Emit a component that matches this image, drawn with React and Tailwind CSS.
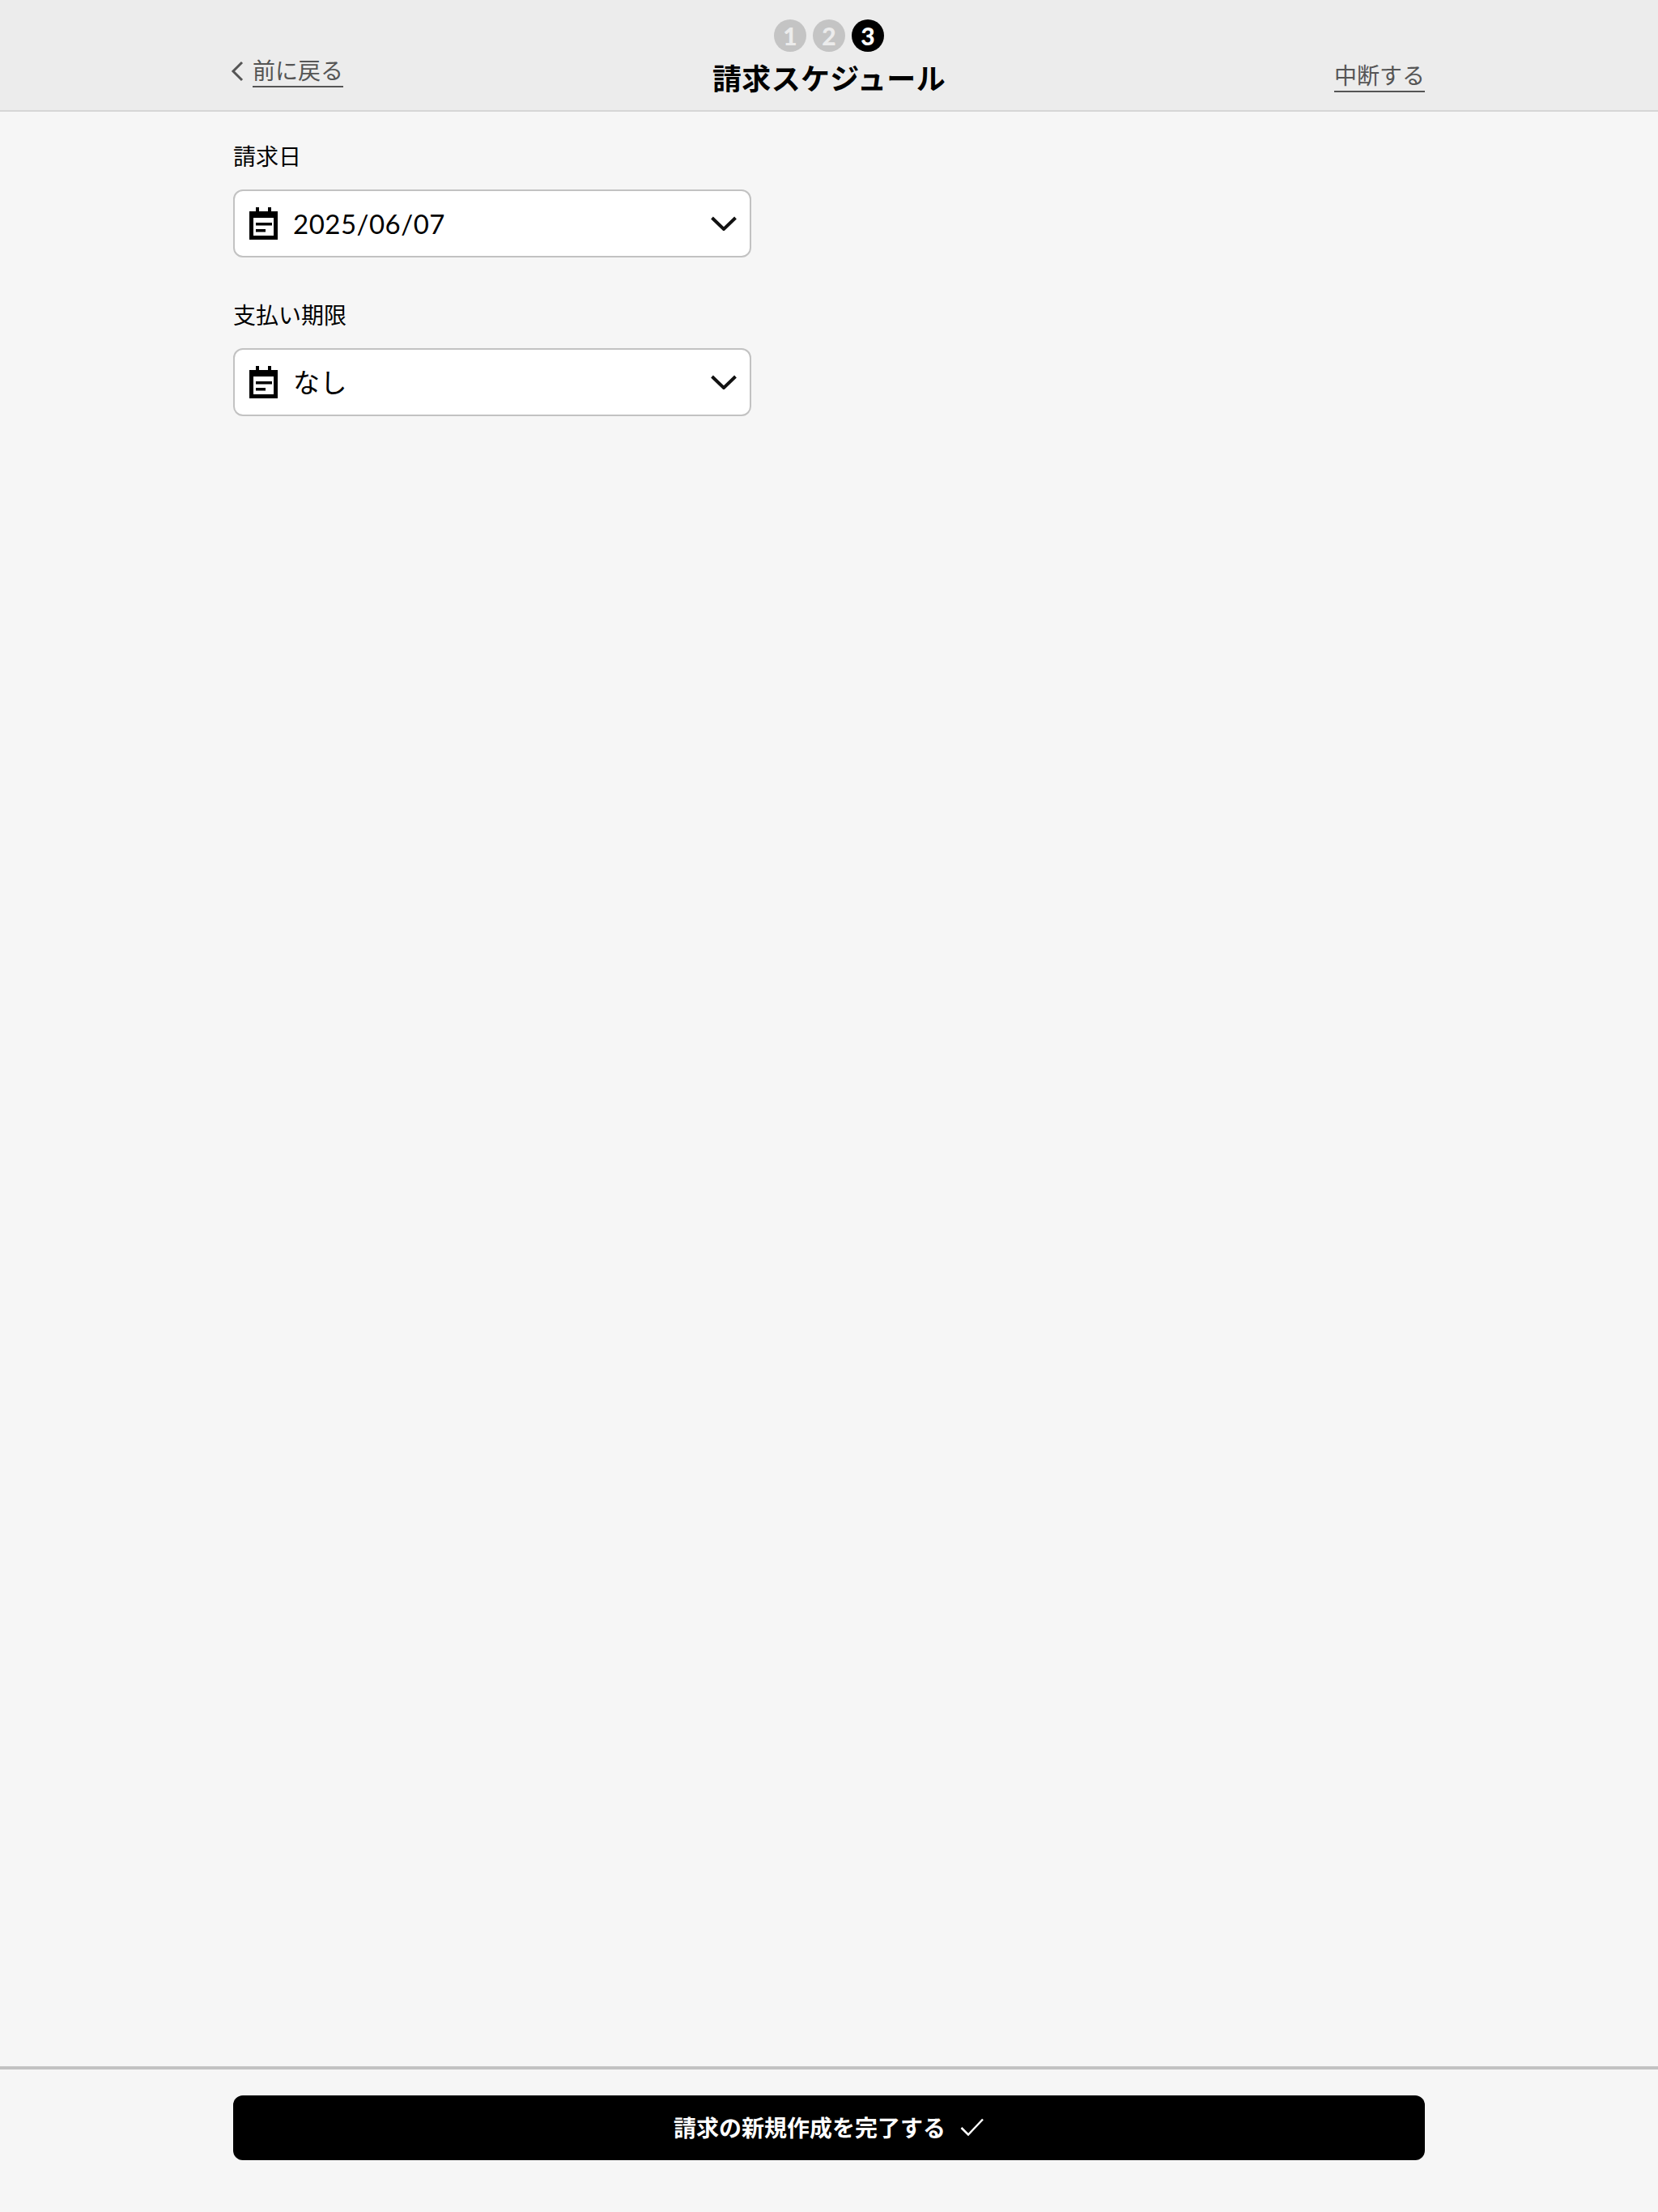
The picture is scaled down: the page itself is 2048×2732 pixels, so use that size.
import React from 'react';

const FONT = "font-['Lato','Noto_Sans_CJK_JP',sans-serif]";

const StepDot = ({ num, active }) => (
    <div className={`w-10 h-10 rounded-full flex items-center justify-center text-[30px] leading-none font-black ${active ? 'bg-black text-white' : 'bg-[#c4c4c4] text-[#ececec]'}`}>
        {num}
    </div>
);

const CalendarIcon = () => (
    <svg width="35" height="40" viewBox="0 0 35 40" className="shrink-0">
        <rect x="8" y="0" width="4" height="6" fill="#000" />
        <rect x="23" y="0" width="4" height="6" fill="#000" />
        <path fillRule="evenodd" d="M0 5h35v35H0z M5 13v22h25V13z" fill="#000" />
        <rect x="8" y="19" width="20" height="3.5" fill="#000" />
        <rect x="8" y="27" width="12" height="3.5" fill="#000" />
    </svg>
);

const ChevronDown = () => (
    <svg width="32" height="18" viewBox="0 0 32 18" fill="none" className="shrink-0 -mt-px">
        <path d="M1.5 2L16 16L30.5 2" stroke="#111" strokeWidth="4" />
    </svg>
);

const DateField = ({ label, value, className }) => (
    <div className={className}>
        <div className="text-[28px] leading-10 -mt-px text-black">{label}</div>
        <div className="mt-[21px] w-[640px] h-[84px] bg-white border-2 border-[#c2c2c2] rounded-xl flex items-center pl-[18px] pr-[16px]">
            <CalendarIcon />
            <span className="ml-[19px] pt-[2px] text-[33px] tracking-[0.5px] text-black flex-1">{value}</span>
            <ChevronDown />
        </div>
    </div>
);

export default function App() {
    return (
        <div className={`w-[2048px] h-[2732px] bg-[#f6f6f6] flex flex-col ${FONT}`}>
            <header className="h-[138px] bg-[#ececec] border-b-2 border-[#d6d6d6] px-[288px] grid grid-cols-[1fr_auto_1fr]">
                <a className="mt-[68px] self-start justify-self-start flex items-start text-[28px] leading-[38px] text-[#555]">
                    <svg width="16" height="26" viewBox="0 0 16 26" fill="none" className="mt-[7px] -ml-[3px] mr-[11px]">
                        <path d="M14 2L3 13L14 24" stroke="#555" strokeWidth="3" />
                    </svg>
                    <span className="border-b-2 border-[#555] h-[40px] w-[112px]">前に戻る</span>
                </a>
                <div className="flex flex-col items-center pt-[24px]">
                    <div className="flex gap-2">
                        <StepDot num="1" />
                        <StepDot num="2" />
                        <StepDot num="3" active />
                    </div>
                    <h1 className="mt-[8px] text-[36px] leading-[50px] tracking-[0.3px] font-bold text-black">請求スケジュール</h1>
                </div>
                <a className="mt-[74px] self-start justify-self-end border-b-2 border-[#555] h-[40px] w-[112px] text-[28px] leading-[38px] text-[#555]">中断する</a>
            </header>
            <main className="flex-1 px-[288px] pt-[36px]">
                <DateField label="請求日" value="2025/06/07" />
                <DateField label="支払い期限" value="なし" className="mt-[52px]" />
            </main>
            <footer className="h-[180px] border-t-4 border-[#c2c2c2] px-[288px] pt-[32px]">
                <button className="w-full h-[80px] bg-black rounded-xl flex items-center justify-center gap-[18px] text-white text-[28px] font-bold">
                    請求の新規作成を完了する
                    <svg width="30" height="24" viewBox="0 0 30 24" fill="none" className="-mt-[2px]">
                        <path d="M1.5 13L10 21.5L28 2.5" stroke="#fff" strokeWidth="2.5" />
                    </svg>
                </button>
            </footer>
        </div>
    );
}
